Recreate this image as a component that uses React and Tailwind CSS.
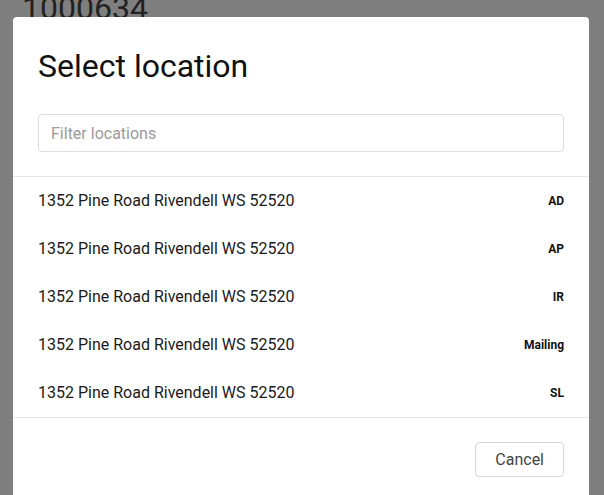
import React from "react";

const locations = [
  { id: 1, address: "1352 Pine Road Rivendell WS 52520", type: "AD" },
  { id: 2, address: "1352 Pine Road Rivendell WS 52520", type: "AP" },
  { id: 3, address: "1352 Pine Road Rivendell WS 52520", type: "IR" },
  { id: 4, address: "1352 Pine Road Rivendell WS 52520", type: "Mailing" },
  { id: 5, address: "1352 Pine Road Rivendell WS 52520", type: "SL" },
];

const App = () => {
  return (
    <div
      className="relative h-[495px] w-[604px] overflow-hidden bg-white"
      style={{ fontFamily: "Roboto, 'Liberation Sans', sans-serif" }}
    >
      {/* page behind the dialog */}
      <div className="mt-[-12px] pl-[22px] text-[32px] leading-[40px] text-[#444]">1000634</div>

      <div className="absolute inset-0 bg-black/50" />

      <div className="absolute left-[13px] top-[17px] flex h-[500px] w-[576px] flex-col rounded-[4px] bg-white">
        <div className="px-[25px] pb-[24px] pt-[30px]">
          <h2 className="text-[32px] leading-[38px] text-[#111]">Select location</h2>
          <input
            type="text"
            placeholder="Filter locations"
            className="mt-[29px] h-[38px] w-full rounded-[4px] border border-[#dcdcdc] px-[12px] text-[16px] text-[#222] outline-none placeholder:text-[#9a9a9a]"
          />
        </div>

        <div className="border-y border-[#e6e6e6]">
          {locations.map(loc => (
            <div key={loc.id} className="flex h-[48px] items-center justify-between px-[25px]">
              <span className="text-[16px] text-[#1a1a1a]">{loc.address}</span>
              <span className="text-[12px] font-bold text-[#111]">{loc.type}</span>
            </div>
          ))}
        </div>

        <div className="flex justify-end px-[25px] pt-[24px]">
          <button className="h-[35px] rounded-[4px] border border-[#d6d6d6] px-[19px] text-[16px] text-[#444]">
            Cancel
          </button>
        </div>
      </div>
    </div>
  );
};

export default App;
